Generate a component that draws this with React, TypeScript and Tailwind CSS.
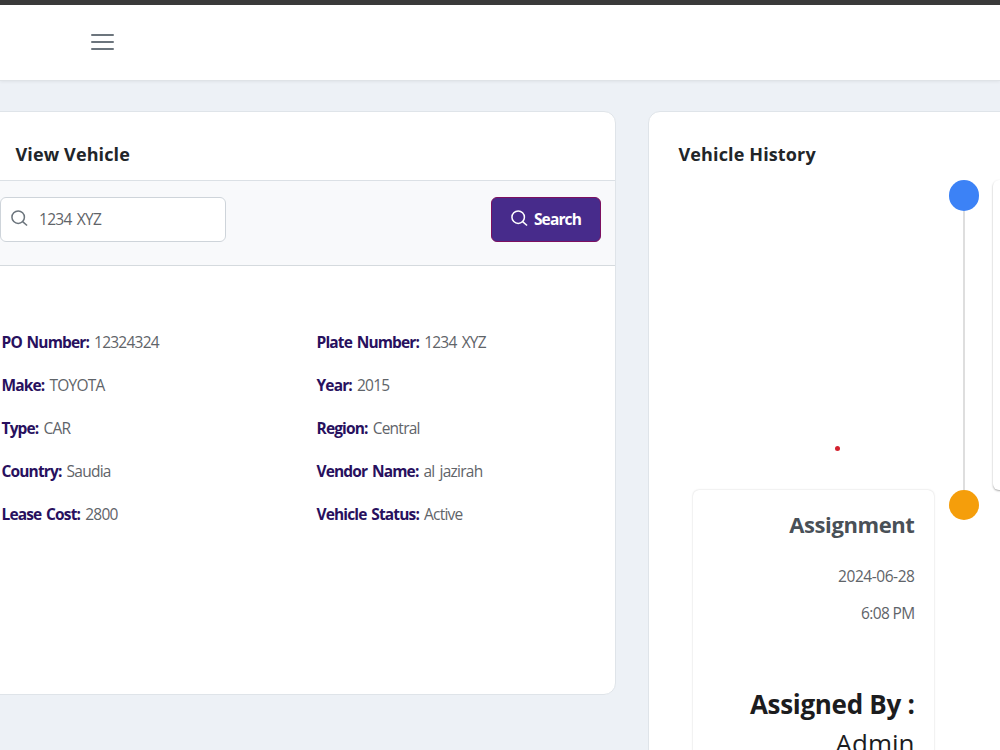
import type { ReactNode } from "react";

type Detail = { label: string; value: string };

const details: Detail[] = [
  { label: "PO Number:", value: "12324324" },
  { label: "Plate Number:", value: "1234 XYZ" },
  { label: "Make:", value: "TOYOTA" },
  { label: "Year:", value: "2015" },
  { label: "Type:", value: "CAR" },
  { label: "Region:", value: "Central" },
  { label: "Country:", value: "Saudia" },
  { label: "Vendor Name:", value: "al jazirah" },
  { label: "Lease Cost:", value: "2800" },
  { label: "Vehicle Status:", value: "Active" },
];

function SearchIcon({ className }: { className: string }) {
  return (
    <svg className={className} viewBox="0 0 18 18" fill="none" stroke="currentColor" strokeWidth="1.6">
      <circle cx="7.6" cy="7.6" r="6.6" />
      <path d="M12.3 12.3L17 16.4" />
    </svg>
  );
}

function Title({ children }: { children: ReactNode }) {
  return (
    <h2 className="text-[18px] leading-6 font-bold tracking-[0.13px] whitespace-nowrap text-[#212529]">
      {children}
    </h2>
  );
}

function VehicleCard() {
  return (
    <section className="-ml-4 h-[584px] w-[632px] shrink-0 overflow-hidden rounded-[12px] border border-[#dfe4e9] bg-white">
      <div className="flex h-[69px] items-end border-b border-[#dbe0e5] pb-3.5 pl-[30.5px]">
        <Title>View Vehicle</Title>
      </div>
      <div className="flex h-[85px] items-start justify-between border-b border-[#d5dade] bg-[#f8f9fb] pt-4 pr-3.5 pl-[15px]">
        <div className="flex h-[45px] w-[226px] items-center gap-[11px] rounded-[6px] border border-[#ced4da] bg-white pl-[10px] text-[15.5px] tracking-[-0.7px] text-[#5f6469]">
          <SearchIcon className="mb-0.5 size-[17px] text-[#6c757d]" />
          <span className="pt-px [word-spacing:1.8px]">1234 XYZ</span>
        </div>
        <button className="flex h-[45px] w-[110px] items-center justify-center gap-1.5 rounded-[6px] border border-[#7d1060] bg-[#472b8b] text-[15.5px] font-bold tracking-[-0.85px] text-white">
          <SearchIcon className="mb-0.5 size-[17px]" />
          <span className="pt-px">Search</span>
        </button>
      </div>
      <dl className="mt-[55px] grid grid-cols-[315px_1fr] pl-[16.5px]">
        {details.map((d) => (
          <div key={d.label} className="flex h-[43px] items-center gap-[5px] text-[15.5px] whitespace-nowrap">
            <dt className="font-bold tracking-[-0.85px] text-[#28105e] [word-spacing:1.5px]">{d.label}</dt>
            <dd className="tracking-[-0.75px] text-[#5f6469] [word-spacing:1.8px]">{d.value}</dd>
          </div>
        ))}
      </dl>
    </section>
  );
}

function HistoryCard() {
  return (
    <section className="relative h-[900px] w-[632px] shrink-0 rounded-[12px] border border-[#dfe4e9] bg-white pt-[30px] pl-[29.5px]">
      <Title>Vehicle History</Title>
      <div className="mt-[14px] flex h-[310px]">
        <div className="w-[270px] shrink-0" />
        <div className="flex w-[30px] shrink-0 flex-col items-center">
          <div className="h-[31px] w-[30px] shrink-0 rounded-full bg-[#3c82f6]" />
          <div className="w-[2px] grow bg-[#dedede]" />
        </div>
        <div className="ml-[14px] h-[310px] w-[242px] shrink-0 rounded-[6px] bg-white shadow-[0_1px_2px_rgba(0,0,0,0.35)]" />
      </div>
      <div className="flex">
        <div className="ml-[14px] h-[400px] w-[241px] shrink-0 rounded-[6px] bg-white pt-[19px] pr-[19px] text-right shadow-[0_0px_2px_rgba(0,0,0,0.2)]">
          <h3 className="text-[22px] leading-[30px] font-bold tracking-[-0.4px] text-[#495057]">Assignment</h3>
          <p className="mt-[26px] text-[15.5px] leading-[23px] tracking-[-0.45px] text-[#5f6469]">2024-06-28</p>
          <p className="mt-[14px] text-[15.5px] leading-[23px] tracking-[-0.65px] text-[#5f6469]">6:08 PM</p>
          <p className="mt-[60px] text-[26px] leading-[39px] font-bold tracking-[-0.3px] whitespace-nowrap text-[#1c1c1e]">
            Assigned By :
          </p>
          <p className="text-[26px] leading-[39px] tracking-[0px] text-[#1c1c1e]">Admin</p>
        </div>
        <div className="ml-[15px] size-[30px] shrink-0 rounded-full bg-[#f59e0b]" />
      </div>
      <span className="absolute top-[334px] left-[186px] size-[5px] rounded-full bg-[#d3222f]" />
    </section>
  );
}

export default function App() {
  return (
    <div className="h-[750px] w-[1000px] overflow-hidden bg-[#edf1f6] font-['Open_Sans','Noto_Sans',sans-serif]">
      <header className="h-[81px] border-t-[5px] border-b border-t-[#3a3a3a] border-b-[#dfe3e7] bg-white pt-[29px] pl-[91px] shadow-[0_1px_3px_rgba(0,0,0,0.06)]">
        <button className="flex w-[23px] flex-col gap-[5px]" aria-label="Menu">
          <span className="h-[2px] rounded-full bg-[#6c757d]" />
          <span className="h-[2px] rounded-full bg-[#6c757d]" />
          <span className="h-[2px] rounded-full bg-[#6c757d]" />
        </button>
      </header>
      <main className="mt-[30px] flex items-start gap-8">
        <VehicleCard />
        <HistoryCard />
      </main>
    </div>
  );
}
